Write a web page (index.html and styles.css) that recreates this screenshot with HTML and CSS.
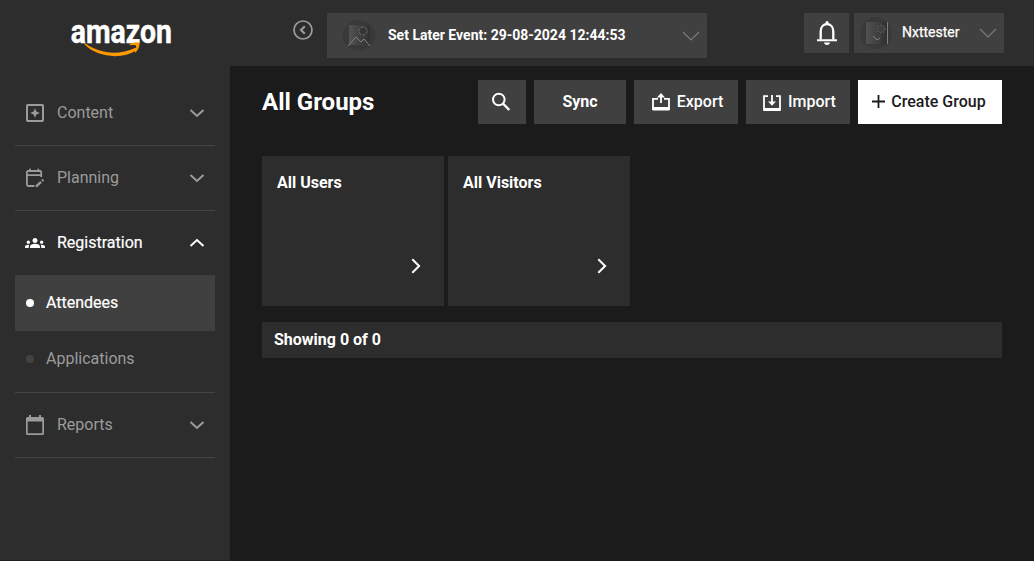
FILE: index.html
```html
<!DOCTYPE html>
<html lang="en">
<head>
<meta charset="utf-8">
<title>All Groups</title>
<link rel="stylesheet" href="styles.css">
</head>
<body>
<header class="topbar">
  <svg class="logo" width="106" height="50" viewBox="0 -11 106 50" role="img" aria-label="amazon">
    <text class="wordmark" x="2.8" y="24" textLength="101" lengthAdjust="spacingAndGlyphs">amazon</text>
    <path d="M17.500 24.600C32 35.200 51 36.400 67 29c1.800-.8 3 .7 1.500 2C54 41.400 28 37.900 16.700 25.600c-.6-.7 0-1.400.8-1Z" fill="#ff9900"/>
    <path d="M61.700 25.600c3-2.500 8.500-2.900 9.500-1.500.9 1.500-.6 6.800-3.500 9.200-.6.500-1.200.2-.9-.5 1-2.400 1.700-5.200 1.200-6.200-.6-.9-3.500-.6-5.600-.3-.8.100-1.100-.3-.7-.7Z" fill="#ff9900"/>
  </svg>
  <svg class="collapse" width="20" height="20" viewBox="0 0 20 20" fill="none" stroke="#9b9b9b"><circle cx="10" cy="10" r="9" stroke-width="1.700"/><path d="M11.800 6.300 8 10l3.800 3.700" stroke-width="2.200"/></svg>
  <div class="event-select">
    <svg width="34" height="32" viewBox="0 0 34 32">
      <defs><linearGradient id="g"><stop stop-color="#525252"/><stop offset="1" stop-color="#303030"/></linearGradient></defs>
      <ellipse cx="17" cy="15.500" rx="16.500" ry="15.300" fill="#393939"/><path d="M7 5h21v20H7z" fill="url(#g)"/><circle cx="21" cy="11" r="4" fill="#353535" stroke="#707070" stroke-dasharray="3 1"/><path d="m6 26 8-9 5 5 3-3 6 7" fill="none" stroke="#858585"/>
    </svg>
    <span>Set Later Event: 29-08-2024 12:44:53</span>
    <svg class="thin-chevron" width="18" height="10" viewBox="0 0 18 10"><path d="m1 1 8 8 8-8"/></svg>
  </div>
  <div class="bell">
    <svg width="20" height="24" viewBox="0 0 20 24"><path d="M3.700 18.500V10.500C3.700 6 6.300 3.200 10 3.200s6.300 2.800 6.300 7.300v8" fill="none" stroke="#fff" stroke-width="2.300"/><path d="M8.500 3V1.500a1.500 1.500 0 0 1 3 0V3zM0 18.200h20v2H0zM7 21.500h6c-.2 1.500-1.400 2.500-3 2.500s-2.800-1-3-2.500z" fill="#fff"/></svg>
  </div>
  <div class="account">
    <svg width="32" height="32" viewBox="0 0 32 32"><circle cx="16" cy="16" r="16" fill="#393939"/><path d="M6 5h21v22H6z" fill="url(#g)"/><path d="M27.500 5v22" stroke="#808080"/><circle cx="21" cy="12" r="4" fill="#414141" stroke="#808080" stroke-dasharray="1 2"/><path d="m13 19 4 4 3-2" fill="none" stroke="#858585"/></svg>
    <span>Nxttester</span>
    <svg class="thin-chevron" width="18" height="10" viewBox="0 0 18 10"><path d="m1 1 8 8 8-8"/></svg>
  </div>
</header>
<div class="body">
  <nav class="sidebar">
    <div class="nav-item">
      <svg class="nav-icon" width="20" height="20" viewBox="0 0 20 20"><rect x="2" y="2" width="16" height="16" rx=".8" fill="none" stroke="currentColor" stroke-width="2"/><path d="m10 5.200 1.400 3.400 3.400 1.400-3.400 1.400-1.400 3.400-1.400-3.400L5.200 10l3.400-1.400z" fill="currentColor"/></svg>
      <span>Content</span>
      <svg class="chevron" width="16" height="10" viewBox="0 0 16 10"><path d="m1.500 2 6.500 6 6.500-6"/></svg>
    </div>
    <div class="nav-item">
      <svg class="nav-icon" width="20" height="20" viewBox="0 0 20 20" fill="none" stroke="currentColor" stroke-width="1.800"><path d="M9.500 18H3.300Q1.900 18 1.900 16.600V4.300Q1.900 3 3.200 3H15Q16.200 3 16.200 4.200V9M2 7.200h14M5 .8V3M13.300.8V3"/><path d="m11 18.700 5-4.800m1-1 1.300-1.300" stroke-width="2.400"/></svg>
      <span>Planning</span>
      <svg class="chevron" width="16" height="10" viewBox="0 0 16 10"><path d="m1.500 2 6.500 6 6.500-6"/></svg>
    </div>
    <div class="nav-item open">
      <svg class="nav-icon" width="20" height="20" viewBox="0 0 24 24" fill="currentColor"><path d="M12 12.750c1.630 0 3.070.39 4.240.9 1.080.48 1.760 1.560 1.760 2.730V18H6v-1.610c0-1.180.68-2.260 1.760-2.730 1.170-.52 2.610-.91 4.240-.91zM4 13c1.100 0 2-.9 2-2s-.9-2-2-2-2 .9-2 2 .9 2 2 2zm1.130 1.100c-.37-.06-.74-.1-1.130-.1-.99 0-1.930.21-2.780.58C.48 14.900 0 15.620 0 16.430V18h4.500v-1.610c0-.83.23-1.610.63-2.290zM20 13c1.100 0 2-.9 2-2s-.9-2-2-2-2 .9-2 2 .9 2 2 2zm4 3.430c0-.81-.48-1.530-1.220-1.850-.85-.37-1.790-.58-2.780-.58-.39 0-.76.040-1.130.1.400.68.630 1.460.630 2.290V18H24v-1.570zM12 6c1.660 0 3 1.340 3 3s-1.340 3-3 3-3-1.340-3-3 1.340-3 3-3z"/></svg>
      <span>Registration</span>
      <svg class="chevron" width="16" height="10" viewBox="0 0 16 10"><path d="m1.500 8 6.500-6 6.500 6"/></svg>
    </div>
    <div class="submenu">
      <div class="sub-item active"><i class="dot"></i><span>Attendees</span></div>
      <div class="sub-item"><i class="dot"></i><span>Applications</span></div>
    </div>
    <div class="nav-item">
      <svg class="nav-icon" width="20" height="20" viewBox="0 0 20 20" fill="currentColor"><path d="M2.500 2H4V0h2v2h8V0h2v2h1.500Q19 2 19 3.500v15q0 1.500-1.500 1.500h-15Q1 20 1 18.500v-15Q1 2 2.500 2zM2.700 6.500v11.800h14.600V6.500z" fill-rule="evenodd"/></svg>
      <span>Reports</span>
      <svg class="chevron" width="16" height="10" viewBox="0 0 16 10"><path d="m1.500 2 6.500 6 6.500-6"/></svg>
    </div>
  </nav>
  <main class="content">
    <div class="toolbar">
      <h1>All Groups</h1>
      <button class="btn search" aria-label="Search"><svg width="20" height="20" viewBox="0 0 20 20" fill="none" stroke="#fff" stroke-width="2"><circle cx="7.800" cy="7.500" r="5.800"/><path d="m12 11.700 6.300 6.300" stroke-width="2.400"/></svg></button>
      <button class="btn sync">Sync</button>
      <button class="btn export"><svg width="18" height="18" viewBox="0 0 18 18" fill="none" stroke="#fff" stroke-width="1.800"><path d="M6 5.900H1V15h16V5.900h-5M9 10V2"/><path d="M1.500 15.700h15" stroke-width="3.400" stroke-linecap="round"/><path d="M5 4.500 9 0l4 4.500z" fill="#fff" stroke="none"/></svg>Export</button>
      <button class="btn import"><svg width="18" height="18" viewBox="0 0 18 18" fill="none" stroke="#fff" stroke-width="1.800"><path d="M5 2.100H1V15h16V2.100h-4M9 1v8"/><path d="M1.200 15.700h15.600" stroke-width="2.600" stroke-linecap="round"/><path d="m5 7.500 4 4.300 4-4.300z" fill="#fff" stroke="none"/></svg>Import</button>
      <button class="btn create"><svg width="13" height="13" viewBox="0 0 13 13"><path d="M6.500 0v13M0 6.500h13" stroke="#1b1b1b" stroke-width="1.800"/></svg>Create Group</button>
    </div>
    <div class="cards">
      <section class="card"><h2>All Users</h2><svg width="10" height="16" viewBox="0 0 10 16"><path d="m1.300 1.200 6.800 6.800-6.800 6.800"/></svg></section>
      <section class="card"><h2>All Visitors</h2><svg width="10" height="16" viewBox="0 0 10 16"><path d="m1.300 1.200 6.800 6.800-6.800 6.800"/></svg></section>
    </div>
    <div class="status">Showing 0 of 0</div>
  </main>
</div>
</body>
</html>
```

FILE: styles.css
```css
* { box-sizing: border-box; }
body { margin: 0; height: 561px; overflow: hidden; background: #1b1b1b; color: #fff; font-family: Roboto, "Liberation Sans", sans-serif; }
svg { display: block; flex: none; }
.topbar { height: 66px; background: #2d2d2d; display: flex; align-items: flex-start; padding-right: 30px; }
.logo { margin: 8px 0 0 68px; }
.wordmark { font: 700 33px Roboto, sans-serif; fill: #fff; stroke: #fff; stroke-width: .5; }
.collapse { margin: 20px 14px 0 119px; }
.event-select { margin-top: 13px; width: 380px; height: 45px; background: #404040; display: flex; align-items: center; padding: 0 7px 0 15px; font-weight: 700; font-size: 14px; }
.event-select span { margin-left: 12px; padding-bottom: 2px; white-space: nowrap; }
.thin-chevron { margin-left: auto; fill: none; stroke: #7c7c7c; stroke-width: 1.200; }
.bell { margin: 13px 5px 0 auto; width: 45px; height: 40px; background: #404040; display: flex; align-items: center; justify-content: center; }
.account { margin-top: 13px; width: 150px; height: 40px; background: #404040; display: flex; align-items: center; padding: 0 7px 0 6px; font-size: 14px; }
.account span { margin: -2px 0 0 10px; -webkit-text-stroke: .25px; }
.body { display: flex; height: 495px; }
.sidebar { width: 230px; background: #2d2d2d; padding: 15px 15px 0; border-bottom: 1px solid #211f20; flex: none; }
.nav-item { height: 65px; border-bottom: 1px solid #444; display: flex; align-items: center; padding: 0 10px; color: #9b9b9b; font-size: 16px; }
.nav-item span { margin-left: 12px; padding-bottom: 1px; }
.nav-item.open { height: 64px; border: 0; color: #fff; }
.nav-item.open span, .active span { -webkit-text-stroke: .2px; }
.chevron { margin-left: auto; fill: none; stroke: currentColor; stroke-width: 2; }
.submenu { height: 118px; border-bottom: 1px solid #444; }
.sub-item { height: 56px; display: flex; align-items: center; padding-left: 11px; color: #9b9b9b; font-size: 16px; }
.sub-item span { margin-left: 12px; padding-bottom: 1px; }
.dot { width: 8px; height: 8px; border-radius: 50%; background: #424242; }
.active { background: #404040; color: #fff; }
.active .dot { background: #fff; }
.content { flex: 1; padding: 14px 32px 0; }
.toolbar { display: flex; gap: 8px; align-items: center; height: 44px; }
h1 { margin: 0 auto 0 0; font-size: 24px; line-height: 28px; font-weight: 700; }
.btn { height: 44px; border: 0; padding: 0 0 1px; background: #404040; color: #fff; font: 500 16px Roboto, sans-serif; display: flex; align-items: center; justify-content: center; gap: 7px; white-space: nowrap; }
.search { width: 48px; padding-right: 2px; }
.sync { width: 92px; font-weight: 700; }
.export, .import { width: 104px; padding-left: 3px; }
.import svg { margin-top: 3px; }
.create { width: 144px; padding-right: 2px; background: #fff; color: #1b1b1b; gap: 6px; }
.cards { display: flex; gap: 4px; margin-top: 32px; }
.card { width: 182px; height: 150px; background: #2d2d2d; padding: 17px 23px 32px 15px; display: flex; flex-direction: column; justify-content: space-between; }
.card h2 { margin: 0; font-size: 16px; line-height: 19px; font-weight: 700; }
.card svg { align-self: flex-end; fill: none; stroke: #fff; stroke-width: 2; }
.status { margin-top: 16px; height: 36px; background: #2d2d2d; padding: 0 12px 1px; display: flex; align-items: center; font-size: 16px; font-weight: 700; }
```
